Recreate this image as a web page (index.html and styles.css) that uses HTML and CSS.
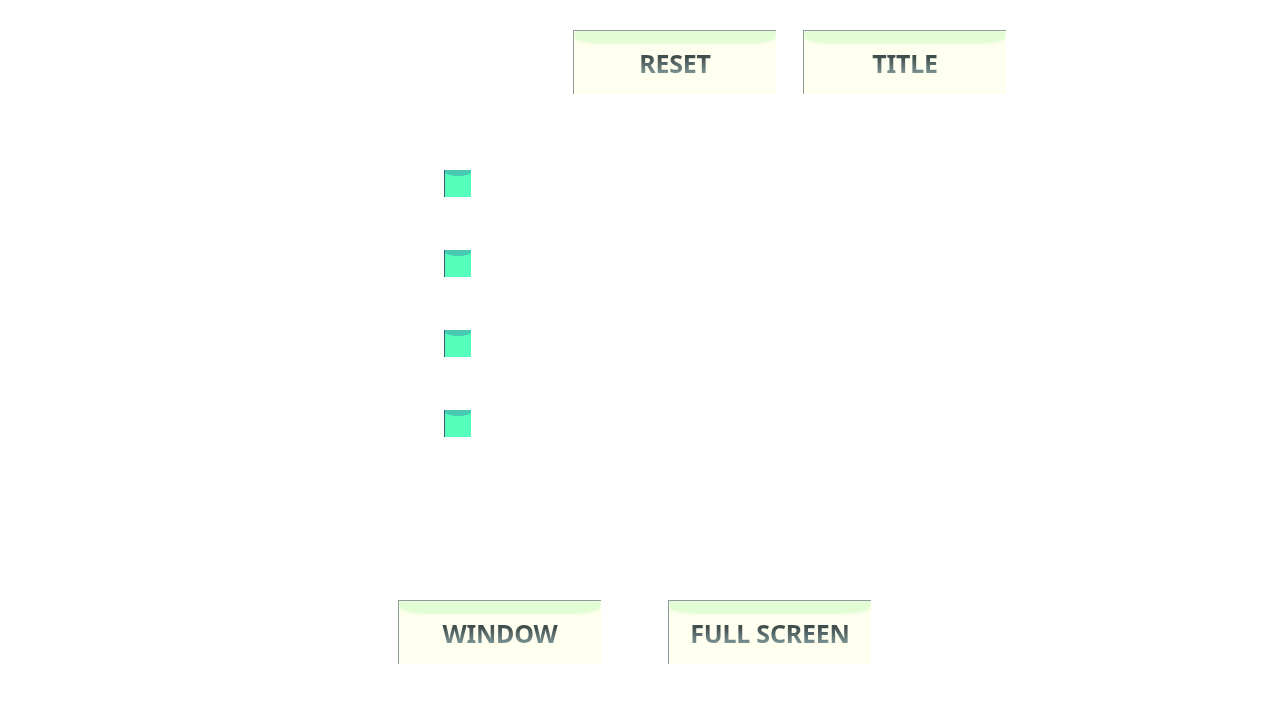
FILE: index.html
```html
<!DOCTYPE html>
<html>
<head>
<meta charset="utf-8">
<link rel="stylesheet" href="styles.css">
</head>
<body>
<div class="page">
  <div class="row row-top">
    <div class="btn"><span class="label">RESET</span></div>
    <div class="btn"><span class="label">TITLE</span></div>
  </div>
  <div class="checks">
    <div class="check"></div>
    <div class="check"></div>
    <div class="check"></div>
    <div class="check"></div>
  </div>
  <div class="row row-bottom">
    <div class="btn"><span class="label">WINDOW</span></div>
    <div class="btn"><span class="label">FULL SCREEN</span></div>
  </div>
</div>
</body>
</html>
```
FILE: styles.css
```css
html, body {
  margin: 0;
  padding: 0;
  background: #ffffff;
}
.page {
  width: 1280px;
  height: 720px;
  overflow: hidden;
  padding-top: 30px;
  box-sizing: border-box;
}
.row {
  display: flex;
}
.row-top {
  padding-left: 573px;
  gap: 27px;
}
.row-bottom {
  padding-left: 398px;
  gap: 67px;
  margin-top: 163px;
}
.btn {
  position: relative;
  width: 202px;
  height: 63px;
  background: #fffff0;
  border-top: 1px solid #8c9c9a;
  border-left: 1px solid #8c9c9a;
  display: flex;
  align-items: center;
  justify-content: center;
  overflow: hidden;
}
.btn::before {
  content: "";
  position: absolute;
  left: 0;
  right: 0;
  top: 0;
  height: 13px;
  background: #e2fcd4;
  border-radius: 0 0 30px 30px / 0 0 7px 7px;
  filter: blur(0.8px);
}
.label {
  position: relative;
  display: inline-block;
  font-family: "Noto Sans", sans-serif;
  font-weight: 700;
  font-size: 25px;
  line-height: 30px;
  letter-spacing: -0.2px;
  background: linear-gradient(#404d4d 30%, #5a6c6c 55%, #7c9494 85%);
  -webkit-background-clip: text;
  background-clip: text;
  color: transparent;
}
.checks {
  display: flex;
  flex-direction: column;
  gap: 53px;
  padding-left: 444px;
  margin-top: 76px;
}
.check {
  position: relative;
  width: 26px;
  height: 27px;
  background: #55ffbb;
  border-left: 1px solid #3a5a78;
  overflow: hidden;
}
.check::before {
  content: "";
  position: absolute;
  left: 0;
  right: 0;
  top: 0;
  height: 6px;
  background: #48cab2;
  border-radius: 0 0 50% 50% / 0 0 4px 4px;
}
```
